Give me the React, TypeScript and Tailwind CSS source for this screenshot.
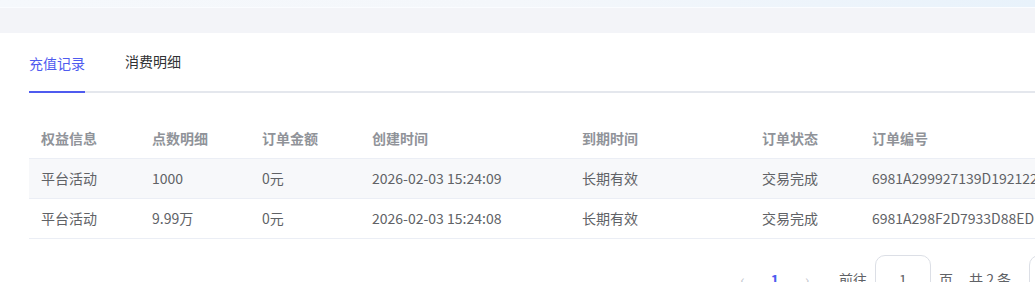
import React from "react";

const cols = [
  { label: "权益信息", w: "w-[111px]" },
  { label: "点数明细", w: "w-[110px]" },
  { label: "订单金额", w: "w-[110px]" },
  { label: "创建时间", w: "w-[210px]" },
  { label: "到期时间", w: "w-[180px]" },
  { label: "订单状态", w: "w-[110px]" },
  { label: "订单编号", w: "w-[260px]" },
];

const rows = [
  ["平台活动", "1000", "0元", "2026-02-03 15:24:09", "长期有效", "交易完成", "6981A299927139D192122A"],
  ["平台活动", "9.99万", "0元", "2026-02-03 15:24:08", "长期有效", "交易完成", "6981A298F2D7933D88EDEB"],
];

export default function App() {
  return (
    <div
      className="w-[1035px] h-[282px] overflow-hidden bg-white"
      style={{ fontFamily: '"Noto Sans CJK SC", "Noto Sans", sans-serif' }}
    >
      <div className="h-[8px] bg-gradient-to-r from-[#f5f8fc] via-[#f4f7fb] to-[#e8f2fb] border-b border-[#fafcff]" />
      <div className="h-[25px] bg-[#f3f4f8]" />
      <div className="pl-[29px]">
        <div className="flex h-[60px] items-end border-b-2 border-[#e4e7ed]">
          <div className="relative -mb-[2px] flex h-[41px] items-start pt-[1px] border-b-2 border-[#4f5bef] text-[14px] text-[#4f5bef] leading-[20px]">
            充值记录
          </div>
          <div className="ml-[40px] flex h-[41px] items-start pt-[1px] text-[14px] text-[#303133] leading-[20px]">
            消费明细
          </div>
        </div>
        <div className="mt-[26px] flex flex-col w-[1100px]">
          <div className="flex h-[40px] items-center border-b border-[#ebeef5]">
            {cols.map((c) => (
              <div key={c.label} className={`${c.w} shrink-0 pl-[12px] text-[14px] font-semibold text-[#909399] whitespace-nowrap`}>
                {c.label}
              </div>
            ))}
          </div>
          {rows.map((r, i) => (
            <div
              key={i}
              className={`flex h-[40px] items-center border-b border-[#ebeef5] ${i === 0 ? "bg-[#f7f8fa]" : "bg-white"}`}
            >
              {r.map((v, j) => (
                <div key={j} className={`${cols[j].w} shrink-0 pl-[12px] text-[14px] text-[#606266] whitespace-nowrap overflow-hidden`}>
                  {v}
                </div>
              ))}
            </div>
          ))}
        </div>
        <div className="mt-[16px] flex items-center pl-[697px] text-[14px] text-[#606266] h-[48px] whitespace-nowrap w-[1200px]">
          <span className="shrink-0 text-[#c0c4cc] w-[33px] text-center">‹</span>
          <span className="shrink-0 text-[#4f5bef] font-semibold w-[32px] text-center">1</span>
          <span className="shrink-0 text-[#c0c4cc] w-[32px] text-center">›</span>
          <span className="shrink-0 ml-[16px]">前往</span>
          <div className="shrink-0 ml-[8px] flex h-[48px] w-[56px] items-center justify-center rounded-[10px] border border-[#dcdfe6]">
            1
          </div>
          <span className="shrink-0 ml-[8px]">页</span>
          <span className="shrink-0 ml-[16px]">共 2 条</span>
          <div className="shrink-0 ml-[18px] h-[48px] w-[80px] rounded-[10px] border border-[#dcdfe6]" />
        </div>
      </div>
    </div>
  );
}
